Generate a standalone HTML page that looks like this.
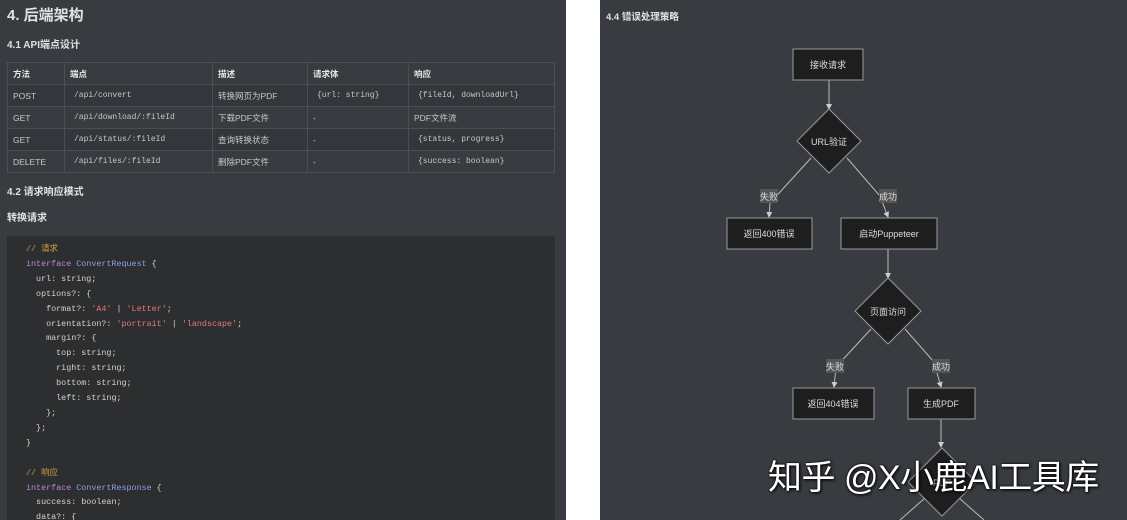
<!DOCTYPE html>
<html><head><meta charset="utf-8"><style>
*{margin:0;padding:0;box-sizing:border-box}
html,body{width:1127px;height:520px;overflow:hidden}
body{background:#fff;font-family:"Liberation Sans","Noto Sans CJK SC",sans-serif;position:relative}
#L{position:absolute;left:0;top:0;width:566px;height:520px;background:#383b40;overflow:hidden}
#R{position:absolute;left:600px;top:0;width:527px;height:520px;background:#383b40}
.h1{position:absolute;left:7px;top:4px;font-size:15px;font-weight:bold;color:#e2e2e2}
.h3{position:absolute;left:7px;font-size:10px;font-weight:bold;color:#e0e0e0}
table{position:absolute;left:7px;top:62px;width:548px;border-collapse:collapse;font-size:8.5px;color:#c8c8c8}
td{border:1px solid #4b4f55;height:22px;padding:0 5px;white-space:nowrap;vertical-align:middle}
tr:nth-child(1) td{font-weight:bold;color:#e6e6e6;height:22px}
tr:nth-child(even){background:#33363b}
.m{font-family:"Liberation Mono","Noto Sans CJK SC",monospace;font-size:8px;padding-left:9px}
#code{position:absolute;left:7px;top:236px;width:548px;height:284px;overflow:hidden;background:#2d2e30;padding:6px 0 0 19px;font-family:"Liberation Mono","Noto Sans CJK SC",monospace;font-size:8.4px;line-height:14.9px;color:#d4d4d4;white-space:pre}
.c{color:#d49a4a}.k{color:#b58ad6}.t{color:#8e9ee8}.s{color:#e07b7b}
#wm{position:absolute;left:768px;top:450px;font-size:34px;color:#fff;text-shadow:1px 1px 3px #000,0 0 2px #000;white-space:nowrap;letter-spacing:-0.5px}
</style></head><body>
<div id="L">
<div class="h1">4. 后端架构</div>
<div class="h3" style="top:36px">4.1 API端点设计</div>
<table>
<tr><td style="width:57px">方法</td><td style="width:148px">端点</td><td style="width:95px">描述</td><td style="width:101px">请求体</td><td>响应</td></tr>
<tr><td>POST</td><td class="m">/api/convert</td><td>转换网页为PDF</td><td class="m">{url: string}</td><td class="m">{fileId, downloadUrl}</td></tr>
<tr><td>GET</td><td class="m">/api/download/:fileId</td><td>下载PDF文件</td><td>-</td><td>PDF文件流</td></tr>
<tr><td>GET</td><td class="m">/api/status/:fileId</td><td>查询转换状态</td><td>-</td><td class="m">{status, progress}</td></tr>
<tr><td>DELETE</td><td class="m">/api/files/:fileId</td><td>删除PDF文件</td><td>-</td><td class="m">{success: boolean}</td></tr>
</table>
<div class="h3" style="top:183px">4.2 请求响应模式</div>
<div class="h3" style="top:209px">转换请求</div>
<div id="code"><span class="c">// 请求</span>
<span class="k">interface</span> <span class="t">ConvertRequest</span> {
  url: string;
  options?: {
    format?: <span class="s">'A4'</span> | <span class="s">'Letter'</span>;
    orientation?: <span class="s">'portrait'</span> | <span class="s">'landscape'</span>;
    margin?: {
      top: string;
      right: string;
      bottom: string;
      left: string;
    };
  };
}

<span class="c">// 响应</span>
<span class="k">interface</span> <span class="t">ConvertResponse</span> {
  success: boolean;
  data?: {</div>
</div>
<div id="R">
<div class="h3" style="top:9px;left:6px;font-size:9.5px">4.4 错误处理策略</div>
</div>
<svg style="position:absolute;left:0;top:0" width="1127" height="520" font-family="Liberation Sans,Noto Sans CJK SC,sans-serif" font-size="9" fill="#ddd">
<defs><marker id="a" markerWidth="6" markerHeight="6" refX="5" refY="3" orient="auto"><path d="M0,0L6,3L0,6z" fill="#ccc"/></marker></defs>
<g stroke="#bbb" stroke-width="1" fill="none">
<line x1="829" y1="80" x2="829" y2="109" marker-end="url(#a)"/>
<polyline points="811,158 770,203 769,217" marker-end="url(#a)"/>
<polyline points="847,158 880,196 888,217" marker-end="url(#a)"/>
<line x1="888" y1="249" x2="888" y2="278" marker-end="url(#a)"/>
<polyline points="871,329 836,367 834,387" marker-end="url(#a)"/>
<polyline points="905,329 934,362 941,387" marker-end="url(#a)"/>
<line x1="941" y1="419" x2="941" y2="447" marker-end="url(#a)"/>
<line x1="925" y1="498" x2="900" y2="520"/>
<line x1="959" y1="498" x2="984" y2="520"/>
</g>
<g fill="#1e1e1e" stroke="#9a9a9a" stroke-width="1">
<rect x="793" y="49" width="70" height="31"/>
<polygon points="829,109 861,141 829,173 797,141"/>
<rect x="727" y="218" width="85" height="31"/>
<rect x="841" y="218" width="96" height="31"/>
<polygon points="888,278 921,311 888,344 855,311"/>
<rect x="793" y="388" width="81" height="31"/>
<rect x="908" y="388" width="67" height="31"/>
<polygon points="942,448 976,482 942,516 908,482"/>
</g>
<g fill="#555">
<rect x="760" y="189" width="18" height="14"/><rect x="879" y="189" width="18" height="14"/>
<rect x="826" y="359" width="18" height="14"/><rect x="932" y="359" width="18" height="14"/>
</g>
<g text-anchor="middle">
<text x="828" y="68">接收请求</text>
<text x="829" y="145">URL验证</text>
<text x="769" y="200">失败</text><text x="888" y="200">成功</text>
<text x="769" y="237">返回400错误</text>
<text x="889" y="237">启动Puppeteer</text>
<text x="888" y="315">页面访问</text>
<text x="835" y="370">失败</text><text x="941" y="370">成功</text>
<text x="833" y="407">返回404错误</text>
<text x="941" y="407">生成PDF</text>
<text x="942" y="486">PDF</text>
</g>
</svg>
<div id="wm">知乎 @X小鹿AI工具库</div>
</body></html>
